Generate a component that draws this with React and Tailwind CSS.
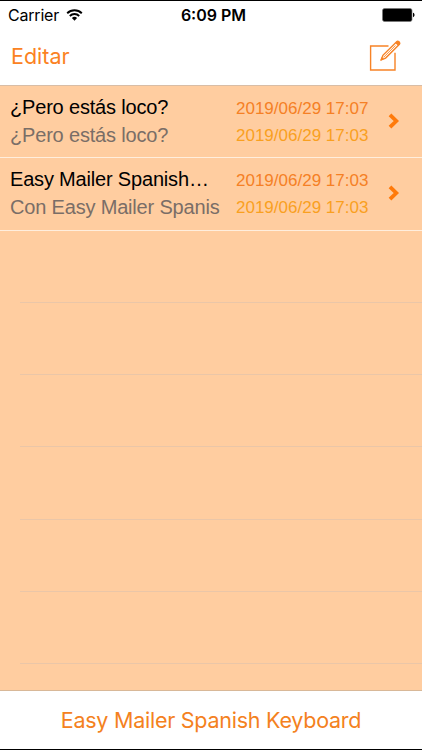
import React from "react";

const mails = [
  {
    title: "¿Pero estás loco?",
    body: "¿Pero estás loco?",
    updated: "2019/06/29 17:07",
    created: "2019/06/29 17:03",
  },
  {
    title: "Easy Mailer Spanish…",
    body: "Con Easy Mailer Spanis",
    updated: "2019/06/29 17:03",
    created: "2019/06/29 17:03",
  },
];

const emptyRows = [0, 1, 2, 3, 4, 5];

const StatusBar = () => (
  <div className="grid grid-cols-3 items-center h-7 pl-2 pr-[7px] text-black">
    <div className="flex items-center gap-[7px]">
      <span className="text-[16px] leading-none tracking-[-0.2px]">Carrier</span>
      <svg width="17" height="12" viewBox="0 0 17 12" fill="none">
        <path d="M1.2 4.3a10.4 10.4 0 0 1 14.6 0" stroke="#000" strokeWidth="1.9" />
        <path d="M3.8 7a6.7 6.7 0 0 1 9.4 0" stroke="#000" strokeWidth="1.9" />
        <path d="M8.5 11.8 5.9 9.1a3.7 3.7 0 0 1 5.2 0z" fill="#000" />
      </svg>
    </div>
    <span className="pl-1 text-center text-[16px] leading-none font-semibold">
      6:09 PM
    </span>
    <svg className="justify-self-end" width="33" height="14" viewBox="0 0 33 14">
      <rect x="0.5" y="0.5" width="29.5" height="13" rx="2" fill="#000" stroke="#777" strokeWidth="0.7" />
      <path d="M31 4.8c2 .6 2 3.8 0 4.4z" fill="#000" />
    </svg>
  </div>
);

const ComposeIcon = () => (
  <svg width="32" height="32" viewBox="0 0 32 32" fill="none" stroke="#f78326">
    <path d="M19.5 6H1.6v24H26V12.8" strokeWidth="1.4" />
    <path d="m12.3 19.7 1.6-4.4L27.4 1.9c1.8-1.6 4.4.8 2.8 2.7L16.6 18.1z" strokeWidth="1.4" />
    <path d="m14.5 17.4 12-12" strokeWidth="0.9" />
    <path d="m26.2 2.9 1.7-1.5c1.7-1.1 4 1.1 2.7 2.9l-1.5 1.5z" fill="#f78326" stroke="none" />
    <path d="m12 20 .7-2.3 1.5 1.5z" fill="#f78326" />
  </svg>
);

const MailRow = ({ mail }) => (
  <div className="flex items-center h-[72.3px] pb-[2px] pl-[10px] pr-[22px] border-b border-[#ffeedd]">
    <div className="w-[226px] text-[20px] leading-7 tracking-[-0.18px] whitespace-nowrap">
      <p className="text-black">{mail.title}</p>
      <p className="text-[#7a6e67]">{mail.body}</p>
    </div>
    <div className="pt-[3px] text-[17px] leading-[27.5px] whitespace-nowrap">
      <p className="text-[#f58025]">{mail.updated}</p>
      <p className="text-[#f9a01f]">{mail.created}</p>
    </div>
    <svg className="ml-auto" width="12" height="16" viewBox="0 0 12 16" fill="none">
      <path d="m2 1.8 6.3 6.2L2 14.2" stroke="#ff7a0a" strokeWidth="3.8" />
    </svg>
  </div>
);

const App = () => {
  return (
    <div className="w-full h-screen flex flex-col overflow-hidden bg-white border-y border-black font-['Inter','Liberation_Sans',sans-serif]">
      <StatusBar />
      <header className="flex items-center justify-between h-[57px] pb-[3px] pl-[11px] pr-[21px] border-b border-[#d8bda6]">
        <button className="pt-[2px] text-[21.5px] leading-none text-[#fb8222]">Editar</button>
        <button>
          <ComposeIcon />
        </button>
      </header>

      <main className="flex-1 bg-[#ffcda0] font-['Liberation_Sans',sans-serif]">
        {mails.map((mail, i) => (
          <MailRow key={i} mail={mail} />
        ))}
        {emptyRows.map((n) => (
          <div key={n} className="h-[72.3px] ml-5 border-b border-[#eac6a8]" />
        ))}
      </main>

      <footer className="flex items-center justify-center h-[59px] pt-[2px] border-t border-[#d8b898]">
        <button className="text-[21.5px] leading-none tracking-[-0.25px] text-[#f48120]">
          Easy Mailer Spanish Keyboard
        </button>
      </footer>
    </div>
  );
};

export default App;
